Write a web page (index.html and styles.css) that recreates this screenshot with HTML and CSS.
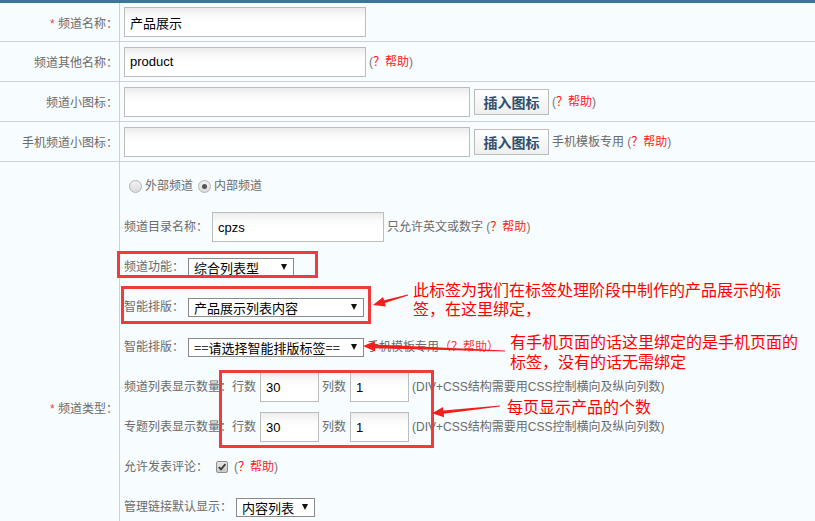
FILE: index.html
```html
<!DOCTYPE html>
<html lang="zh-CN">
<head>
<meta charset="utf-8">
<title>频道设置</title>
<link rel="stylesheet" href="styles.css">
</head>
<body>
<div class="page">
  <div class="topbar"></div>
  <div class="form">
    <div class="row r1">
      <div class="lbl"><span><b class="req">*</b> 频道名称：</span></div>
      <div class="cell"><input class="inp w242" value="产品展示"></div>
    </div>
    <div class="row std">
      <div class="lbl"><span>频道其他名称：</span></div>
      <div class="cell"><input class="inp w242" value="product"><span class="help">(<em>？帮助</em>)</span></div>
    </div>
    <div class="row std">
      <div class="lbl"><span>频道小图标：</span></div>
      <div class="cell"><input class="inp w346" value=""><span class="btn">插入图标</span><span class="help">(<em>？帮助</em>)</span></div>
    </div>
    <div class="row std">
      <div class="lbl"><span>手机频道小图标：</span></div>
      <div class="cell"><input class="inp w346" value=""><span class="btn">插入图标</span><span class="txt">手机模板专用 <span class="help">(<em>？帮助</em>)</span></span></div>
    </div>
    <div class="row r5">
      <div class="lbl"><span><b class="req">*</b> 频道类型：</span></div>
      <div class="stack">
        <div class="item first">
          <span class="radio"></span><span class="txt">外部频道</span><span class="radio on"></span><span class="txt">内部频道</span>
        </div>
        <div class="item">
          <span class="txt">频道目录名称：</span><input class="inp w172" value="cpzs"><span class="txt">只允许英文或数字 <span class="help">(<em>？帮助</em>)</span></span>
        </div>
        <div class="item">
          <span class="txt">频道功能：</span><div class="sel w106"><span>综合列表型</span><i class="caret"></i></div>
        </div>
        <div class="item">
          <span class="txt">智能排版：</span><div class="sel w176"><span>产品展示列表内容</span><i class="caret"></i></div>
        </div>
        <div class="item">
          <span class="txt">智能排版：</span><div class="sel w176"><span>==请选择智能排版标签==</span><i class="caret"></i></div><span class="txt">手机模板专用<em class="red">（？帮助）</em></span>
        </div>
        <div class="item">
          <span class="txt">频道列表显示数量：行数</span><input class="inp num" value="30"><span class="txt">列数</span><input class="inp num" value="1"><span class="txt">(DIV+CSS结构需要用CSS控制横向及纵向列数)</span>
        </div>
        <div class="item">
          <span class="txt">专题列表显示数量：行数</span><input class="inp num" value="30"><span class="txt">列数</span><input class="inp num" value="1"><span class="txt">(DIV+CSS结构需要用CSS控制横向及纵向列数)</span>
        </div>
        <div class="item">
          <span class="txt">允许发表评论：</span><span class="check"><svg width="10" height="10" viewBox="0 0 10 10"><path d="M1.8 5.2 L4 7.4 L8.4 2.2" fill="none" stroke="#3a3a3a" stroke-width="1.8"/></svg></span><span class="help hc">(<em>？帮助</em>)</span>
        </div>
        <div class="item">
          <span class="txt">管理链接默认显示：</span><div class="sel w79"><span>内容列表</span><i class="caret"></i></div>
        </div>
      </div>
    </div>
  </div>

  <div class="annot">
    <div class="box b1"></div>
    <div class="box b2"></div>
    <div class="box b3"></div>
    <div class="anote n1">此标签为我们在标签处理阶段中制作的产品展示的标签，在这里绑定，</div>
    <div class="anote n2">有手机页面的话这里绑定的是手机页面的标签，没有的话无需绑定</div>
    <div class="anote n3">每页显示产品的个数</div>
    <svg class="arrows" width="815" height="521" viewBox="0 0 815 521">
      <polygon points="373,305 385.9,306.5 384.9,303.1 408.1,295.6 407.9,294.4 384.1,300.3 383.1,296.9" fill="#f21d1d"/>
      <polygon points="363,346 375.2,351.6 375.1,348.3 505,351.5 505,350.5 374.9,344.5 374.8,341.2" fill="#f21d1d"/>
      <polygon points="432,413.3 444.1,417.3 443.8,413.8 500,406.5 500,405.5 443.4,410.4 443.1,406.9" fill="#f21d1d"/>
    </svg>
  </div>
</div>
</body>
</html>
```

FILE: styles.css
```css
* { box-sizing: border-box; }
html, body { margin: 0; padding: 0; overflow: hidden; }
body {
  background: #f7fcfe;
  font-family: "Liberation Sans", "Noto Sans CJK SC", sans-serif;
  font-size: 12px;
  color: #6b6b6b;
}
.page { position: relative; width: 815px; }
.topbar { height: 3px; background: #3b7797; }

.row {
  display: grid;
  grid-template-columns: 120px 1fr;
  border-bottom: 1px solid #cdd1d3;
}
.row.r1 { height: 39px; }
.row.std { height: 40px; }
.row.r5 { border-bottom: none; }

.lbl {
  border-right: 1px solid #cdd1d3;
  display: flex;
  align-items: center;
  justify-content: flex-end;
  padding-right: 1px;
  white-space: nowrap;
}
.req { color: #e04a4a; font-weight: normal; }

.cell {
  display: flex;
  align-items: center;
  gap: 3px;
  padding-left: 4px;
}
.txt { white-space: nowrap; line-height: 14px; }
.help { white-space: nowrap; color: #777; line-height: 14px; }
.help em, em.red { font-style: normal; color: #ff1a1a; }
em.red { color: #f43c3c; }

.inp {
  height: 30px;
  border: 1px solid #bdbdbd;
  background: linear-gradient(#ececec, #f9f9f9 7px, #fff 14px);
  padding: 0 5px;
  margin: 0;
  font-family: "Liberation Sans", "Noto Sans CJK SC", sans-serif;
  font-size: 13px;
  color: #000;
  outline: none;
  border-radius: 0;
}
.w242 { width: 242px; }
.w346 { width: 346px; }
.w172 { width: 172px; margin-left: 1px; }
.num { width: 59px; margin-left: 1px; }

.btn {
  width: 75px;
  height: 26px;
  margin-left: 1px;
  border: 1px solid #bcbcbc;
  background: linear-gradient(#ffffff, #efefef);
  display: flex;
  align-items: center;
  justify-content: center;
  font-family: "Noto Sans CJK SC", sans-serif;
  font-weight: bold;
  font-size: 14px;
  color: #30506e;
}

.stack {
  display: flex;
  flex-direction: column;
  padding: 3px 0 125px 4px;
}
.item {
  height: 40px;
  display: flex;
  align-items: center;
  gap: 3px;
}
.item.first { height: 42px; gap: 0; }

.radio {
  width: 13px;
  height: 13px;
  margin: 0 3px 0 5px;
  border: 1px solid #b4b4b4;
  border-radius: 50%;
  background: linear-gradient(#f2f2f2, #dcdcdc);
  display: flex;
  align-items: center;
  justify-content: center;
}
.radio.on::before {
  content: "";
  width: 5px;
  height: 5px;
  border-radius: 50%;
  background: #555;
}

.sel {
  height: 19px;
  border: 1px solid #8a8a8a;
  background: #fff;
  display: flex;
  align-items: center;
  padding: 0 6px 0 5px;
  margin-left: 1px;
  font-family: "Noto Sans CJK SC", sans-serif;
  font-size: 13px;
  line-height: 17px;
  color: #000;
  white-space: nowrap;
}
.w106 { width: 106px; }
.w176 { width: 176px; }
.w79 { width: 79px; }
.caret {
  margin-left: auto;
  width: 0;
  height: 0;
  border-left: 3px solid transparent;
  border-right: 3px solid transparent;
  border-top: 6px solid #111;
}

.check {
  width: 12px;
  height: 12px;
  margin-left: 5px;
  border: 1px solid #8e8e8e;
  border-radius: 2px;
  background: linear-gradient(#e6e6e6, #c9c9c9);
  display: flex;
  align-items: center;
  justify-content: center;
}
.help.hc { margin-left: 3px; }

.annot {
  position: absolute;
  left: 0;
  top: 0;
  width: 815px;
  height: 521px;
  pointer-events: none;
}
.box { position: absolute; border: 3px solid #f13a3a; }
.b1 { left: 117px; top: 251px; width: 201px; height: 27px; }
.b2 { left: 121px; top: 286px; width: 250px; height: 38px; }
.b3 { left: 219px; top: 370px; width: 215px; height: 78px; }
.anote {
  position: absolute;
  color: #ff0000;
  font-family: "Noto Sans CJK SC", sans-serif;
  font-size: 16px;
  line-height: 19px;
}
.n1 { left: 413px; top: 280px; width: 372px; }
.n2 { left: 510px; top: 331px; width: 292px; line-height: 20px; }
.n3 { left: 507px; top: 398px; line-height: 16px; white-space: nowrap; }
.arrows { position: absolute; left: 0; top: 0; }
```
